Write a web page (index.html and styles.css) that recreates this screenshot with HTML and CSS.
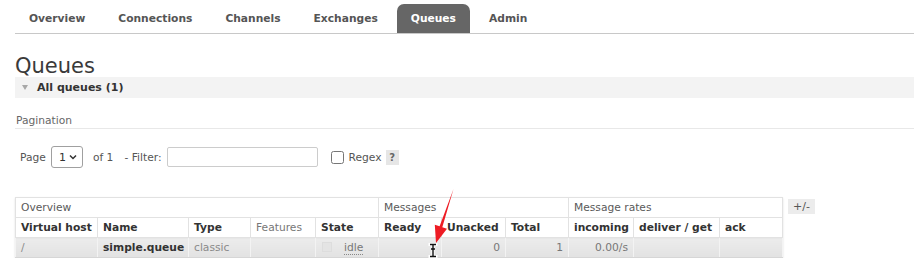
FILE: index.html
```html
<!DOCTYPE html>
<html lang="en">
<head>
    <meta charset="UTF-8">
    <meta name="viewport" content="width=device-width, initial-scale=1.0">
    <title>RabbitMQ Management - Queues</title>
    <link rel="stylesheet" href="styles.css">
</head>
<body>
    <div class="page">
        <ul class="menu">
            <li><a href="#">Overview</a></li>
            <li><a href="#">Connections</a></li>
            <li><a href="#">Channels</a></li>
            <li><a href="#">Exchanges</a></li>
            <li><a href="#" class="selected">Queues</a></li>
            <li><a href="#">Admin</a></li>
        </ul>

        <h1>Queues</h1>
        <div class="section-head"><span class="toggle"></span>All queues (1)</div>

        <h3 class="pagination-title">Pagination</h3>
        <div class="pagination">
            <label for="page">Page</label>
            <span class="select-wrap">
                <select id="page" class="page-select">
                    <option>1</option>
                </select>
                <svg class="chevron" width="8" height="6" viewBox="0 0 8 6">
                    <path d="M1 1.5 L4 4.5 L7 1.5" fill="none" stroke="#333" stroke-width="1.5"/>
                </svg>
            </span>
            <span class="of">of 1</span>
            <label for="filter" class="filter-label">- Filter:</label>
            <input type="text" id="filter" class="filter">
            <input type="checkbox" id="regex" class="regex-box">
            <label for="regex" class="regex-label">Regex</label>
            <span class="help">?</span>
        </div>

        <div class="list-wrap">
            <table class="list">
                <colgroup>
                    <col style="width: 82px">
                    <col style="width: 91px">
                    <col style="width: 62px">
                    <col style="width: 65px">
                    <col style="width: 63px">
                    <col style="width: 63px">
                    <col style="width: 64px">
                    <col style="width: 63px">
                    <col style="width: 65px">
                    <col style="width: 86px">
                    <col style="width: 63px">
                </colgroup>
                <thead>
                    <tr class="group">
                        <th colspan="5">Overview</th>
                        <th colspan="3">Messages</th>
                        <th colspan="3">Message rates</th>
                    </tr>
                    <tr>
                        <th>Virtual host</th>
                        <th>Name</th>
                        <th>Type</th>
                        <th class="muted">Features</th>
                        <th>State</th>
                        <th>Ready</th>
                        <th>Unacked</th>
                        <th>Total</th>
                        <th>incoming</th>
                        <th>deliver / get</th>
                        <th>ack</th>
                    </tr>
                </thead>
                <tbody>
                    <tr>
                        <td class="light">/</td>
                        <td class="name">simple.queue</td>
                        <td class="light">classic</td>
                        <td></td>
                        <td class="state"><span class="dot"></span><abbr>idle</abbr></td>
                        <td></td>
                        <td class="num">0</td>
                        <td class="num">1</td>
                        <td class="num">0.00/s</td>
                        <td></td>
                        <td></td>
                    </tr>
                </tbody>
            </table>
            <span class="columns">+/-</span>
        </div>
    </div>

    <svg class="overlay" width="914" height="276" viewBox="0 0 914 276">
        <polygon points="453.5,189 442.3,227.2 447,228.8 436,243 434.8,224.8 439.6,226.3" fill="#ee1c24"/>
        <g stroke="#fff" stroke-width="3" stroke-linecap="square">
            <path d="M433 245 V256 M430 244.5 H436 M430 256.5 H436"/>
        </g>
        <g stroke="#111" stroke-width="1.4">
            <path d="M433 245 V256 M430 244.5 H436 M430 256.5 H436 M431 249 H435"/>
        </g>
    </svg>
</body>
</html>
```

FILE: styles.css
```css
body {
    margin: 0;
    font-family: "DejaVu Sans", Verdana, sans-serif;
    font-size: 10.7px;
    color: #484848;
    background: #ffffff;
    position: relative;
    overflow: hidden;
}
.page {
    padding-left: 15px;
}
.menu {
    display: flex;
    list-style: none;
    margin: 0;
    padding: 4px 0 0 0;
    border-bottom: 1px solid #c8c8c8;
}
.menu a {
    display: block;
    padding: 8px 14px;
    margin-right: 5px;
    line-height: 13px;
    font-size: 10.7px;
    font-weight: bold;
    color: #555555;
    text-decoration: none;
    border-radius: 7px 7px 0 0;
}
.menu a.selected {
    background-color: #666666;
    color: #ffffff;
}
h1 {
    margin: 21px 0 0 0;
    font-size: 21px;
    line-height: 22px;
    font-weight: normal;
    color: #3a3a3a;
}
.section-head {
    display: flex;
    align-items: center;
    height: 21px;
    padding-left: 7px;
    background: #f3f3f3;
    font-weight: bold;
    font-size: 11px;
    color: #333333;
}
.toggle {
    width: 0;
    height: 0;
    border-left: 3.5px solid transparent;
    border-right: 3.5px solid transparent;
    border-top: 5px solid #a8a8a8;
    margin-right: 9px;
}
.pagination-title {
    margin: 16px 0 0 0;
    padding-left: 1px;
    font-size: 10.7px;
    line-height: 14px;
    font-weight: normal;
    color: #666666;
    border-bottom: 1px solid #e8e8e8;
}
.pagination {
    display: flex;
    align-items: center;
    height: 22px;
    margin: 17px 0 0 5px;
    color: #555555;
}
.select-wrap {
    position: relative;
    display: flex;
    margin: 0 10px 0 5px;
}
.page-select {
    appearance: none;
    -webkit-appearance: none;
    width: 32px;
    height: 22px;
    margin: 0;
    padding: 0 0 0 7px;
    font-family: inherit;
    font-size: 11px;
    color: #333333;
    border: 1px solid #a0a0a0;
    border-radius: 3px;
    background: #ffffff;
}
.chevron {
    position: absolute;
    top: 8px;
    right: 6px;
    pointer-events: none;
}
.of {
    margin-right: 11px;
}
.filter {
    width: 151px;
    height: 20px;
    box-sizing: border-box;
    margin: 0 0 0 5px;
    border: 1px solid #cccccc;
    border-radius: 2px;
}
.regex-box {
    width: 13px;
    height: 13px;
    margin: 0 5px 0 13px;
}
.help {
    margin-left: 4px;
    width: 13px;
    height: 15px;
    line-height: 15px;
    text-align: center;
    background: #e6e6e6;
    color: #666666;
    font-weight: bold;
    font-size: 10px;
}
.list-wrap {
    display: flex;
    align-items: flex-start;
    margin-top: 29px;
}
.list {
    table-layout: fixed;
    width: 767px;
    border-collapse: collapse;
    box-shadow: 0 1px 2px rgba(0, 0, 0, 0.12);
}
.list th,
.list td {
    height: 19px;
    padding: 0 5px;
    text-align: left;
    white-space: nowrap;
    overflow: hidden;
    border: 1px solid #e2e2e2;
}
.list th {
    font-weight: bold;
    color: #333333;
    background: #ffffff;
}
.list tr.group th {
    font-weight: normal;
    color: #5a5a5a;
}
.list th.muted {
    font-weight: normal;
    color: #777777;
}
.list td {
    background: linear-gradient(#ececec, #e2e2e2);
    border-left-color: #f3f3f3;
    border-right-color: #f3f3f3;
    border-bottom-color: #d6d6d6;
    color: #777777;
}
.list td.light {
    color: #8a8a8a;
}
.list td.name {
    font-weight: bold;
    color: #333333;
}
.list td.num {
    text-align: right;
}
.list td.state {
    padding-left: 6px;
}
.dot {
    display: inline-block;
    width: 8px;
    height: 8px;
    margin-right: 12px;
    vertical-align: -1px;
    background: #e4e4e4;
    border: 1px solid #dddddd;
}
abbr {
    text-decoration: none;
    border-bottom: 1px dotted #888888;
    color: #777777;
}
.columns {
    margin: 2px 0 0 5px;
    padding: 0 5px;
    height: 15px;
    line-height: 15px;
    background: #ececec;
    color: #555555;
    font-size: 11px;
}
.overlay {
    position: absolute;
    top: 0;
    left: 0;
    pointer-events: none;
}
```
